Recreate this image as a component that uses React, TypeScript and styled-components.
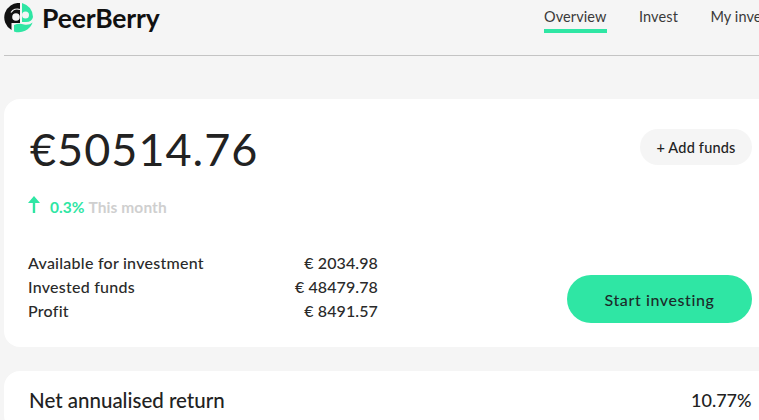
import React from 'react';
import styled, { createGlobalStyle } from 'styled-components';

const GlobalStyle = createGlobalStyle`
    html, body {
        margin: 0;
        padding: 0;
        height: 100%;
        overflow: hidden;
        background-color: #f5f5f5;
    }
`;

const Page = styled.div`
    width: 759px;
    height: 420px;
    overflow: hidden;
    padding-left: 4px;
    box-sizing: border-box;
    font-family: Lato, 'Noto Sans', sans-serif;
    color: #222;
`;

const Header = styled.header`
    width: 900px;
    height: 56px;
    box-sizing: border-box;
    border-bottom: 1px solid #c4c4c4;
    display: flex;
`;

const Brand = styled.div`
    width: 540px;
    display: flex;
    align-items: flex-start;
    gap: 8px;
    padding-top: 3px;
`;

const BrandName = styled.span`
    font-size: 26.5px;
    line-height: 30px;
    font-weight: 700;
    color: #111;
    letter-spacing: -0.15px;
`;

const Nav = styled.nav`
    display: flex;
    gap: 32.5px;
`;

const NavItem = styled.a<{ $active?: boolean }>`
    height: 33px;
    box-sizing: border-box;
    padding-top: 8px;
    font-size: 14.5px;
    line-height: 18px;
    letter-spacing: 0.1px;
    color: #3a3a3a;
    white-space: nowrap;
    border-bottom: 4px solid ${(p) => (p.$active ? '#2fe6a4' : 'transparent')};
`;

const Card = styled.section`
    width: 900px;
    box-sizing: border-box;
    background-color: #fff;
    border-radius: 16px;
`;

const BalanceCard = styled(Card)`
    margin-top: 43px;
    height: 248px;
    padding: 24px 0 0 24px;
    display: flex;
`;

const Left = styled.div`
    width: 350px;
    display: flex;
    flex-direction: column;
`;

const Amount = styled.div`
    font-size: 45px;
    line-height: 52px;
    color: #222;
    letter-spacing: 1px;
    padding-left: 2px;
`;

const Trend = styled.div`
    margin-top: 22px;
    display: flex;
    align-items: center;
    height: 20px;
    font-size: 15.5px;
    font-weight: 700;
`;

const TrendArrow = styled.svg`
    margin: -5px 10px 0 0;
`;

const Up = styled.span`
    color: #2fe6a4;
    margin-right: 4px;
`;

const Muted = styled.span`
    color: #cfcfcf;
    letter-spacing: 0.1px;
`;

const Rows = styled.div`
    margin-top: 34px;
    display: flex;
    flex-direction: column;
`;

const Row = styled.div`
    display: flex;
    justify-content: space-between;
    height: 24px;
    font-size: 16px;
    font-weight: 500;
    line-height: 24px;
    letter-spacing: 0.25px;
    color: #2a2a2a;
`;

const RowValue = styled.span`
    letter-spacing: 0.1px;
`;

const Right = styled.div`
    width: 374px;
    display: flex;
    flex-direction: column;
    align-items: flex-end;
    justify-content: space-between;
    padding-bottom: 24px;
`;

const AddButton = styled.button`
    margin-top: 6px;
    width: 112px;
    height: 36px;
    border: 0;
    border-radius: 18px;
    background-color: #f5f5f5;
    font-family: inherit;
    font-size: 14.5px;
    font-weight: 500;
    letter-spacing: 0.2px;
    color: #222;
`;

const StartButton = styled.button`
    width: 185px;
    height: 48px;
    border: 0;
    border-radius: 24px;
    background-color: #2fe6a4;
    font-family: inherit;
    font-size: 16px;
    font-weight: 500;
    letter-spacing: 0.6px;
    color: #1c2b2a;
`;

const ReturnCard = styled(Card)`
    margin-top: 24px;
    height: 60px;
    padding-left: 25px;
    padding-top: 17px;
    display: flex;
`;

const ReturnLabel = styled.div`
    width: 662px;
    font-size: 20.5px;
    font-weight: 500;
    line-height: 24px;
    color: #222;
`;

const ReturnValue = styled.div`
    font-size: 18px;
    font-weight: 500;
    line-height: 24px;
    color: #222;
`;

const Logo = () => (
    <svg width="30" height="30" viewBox="0 0 30 30">
        {/* dark half, the p bowl is a hole and the stem runs down the inside */}
        <path
            fillRule="evenodd"
            d="M16 0A14.5 14.5 0 0 0 7.5 27V20H16ZM12 10.2A3.8 3.8 0 1 0 12 17.8A3.8 3.8 0 1 0 12 10.2Z"
            fill="#111"
        />
        <path d="M7 9.5A7.5 7.5 0 0 1 16 6.5" fill="none" stroke="#f5f5f5" strokeWidth="1.2" />
        {/* green half, the b bowl is a hole */}
        <path
            fillRule="evenodd"
            d="M18 0A14.5 14.5 0 0 1 29 14Q28 19 22 19H18ZM21.5 8.5A3.5 3.5 0 1 0 21.5 15.5A3.5 3.5 0 1 0 21.5 8.5Z"
            fill="#2fe6a4"
        />
        <path d="M10 22Q15 20 20 21.5Q25 22.5 28.6 19.5A14.5 14.5 0 0 1 10 28.4Z" fill="#2fe6a4" />
    </svg>
);

const rows = [
    ['Available for investment', '€ 2034.98'],
    ['Invested funds', '€ 48479.78'],
    ['Profit', '€ 8491.57'],
];

const App = () => {
    return (
        <Page>
            <GlobalStyle />
            <Header>
                <Brand>
                    <Logo />
                    <BrandName>PeerBerry</BrandName>
                </Brand>
                <Nav>
                    <NavItem $active>Overview</NavItem>
                    <NavItem>Invest</NavItem>
                    <NavItem>My investments</NavItem>
                </Nav>
            </Header>
            <BalanceCard>
                <Left>
                    <Amount>€50514.76</Amount>
                    <Trend>
                        <TrendArrow width="12" height="17" viewBox="0 0 12 17">
                            <path d="M6 0L12 7H7.2V17H4.8V7H0Z" fill="#2fe6a4" />
                        </TrendArrow>
                        <Up>0.3%</Up>
                        <Muted>This month</Muted>
                    </Trend>
                    <Rows>
                        {rows.map(([label, value]) => (
                            <Row key={label}>
                                <span>{label}</span>
                                <RowValue>{value}</RowValue>
                            </Row>
                        ))}
                    </Rows>
                </Left>
                <Right>
                    <AddButton>+ Add funds</AddButton>
                    <StartButton>Start investing</StartButton>
                </Right>
            </BalanceCard>
            <ReturnCard>
                <ReturnLabel>Net annualised return</ReturnLabel>
                <ReturnValue>10.77%</ReturnValue>
            </ReturnCard>
        </Page>
    );
};

export default App;
